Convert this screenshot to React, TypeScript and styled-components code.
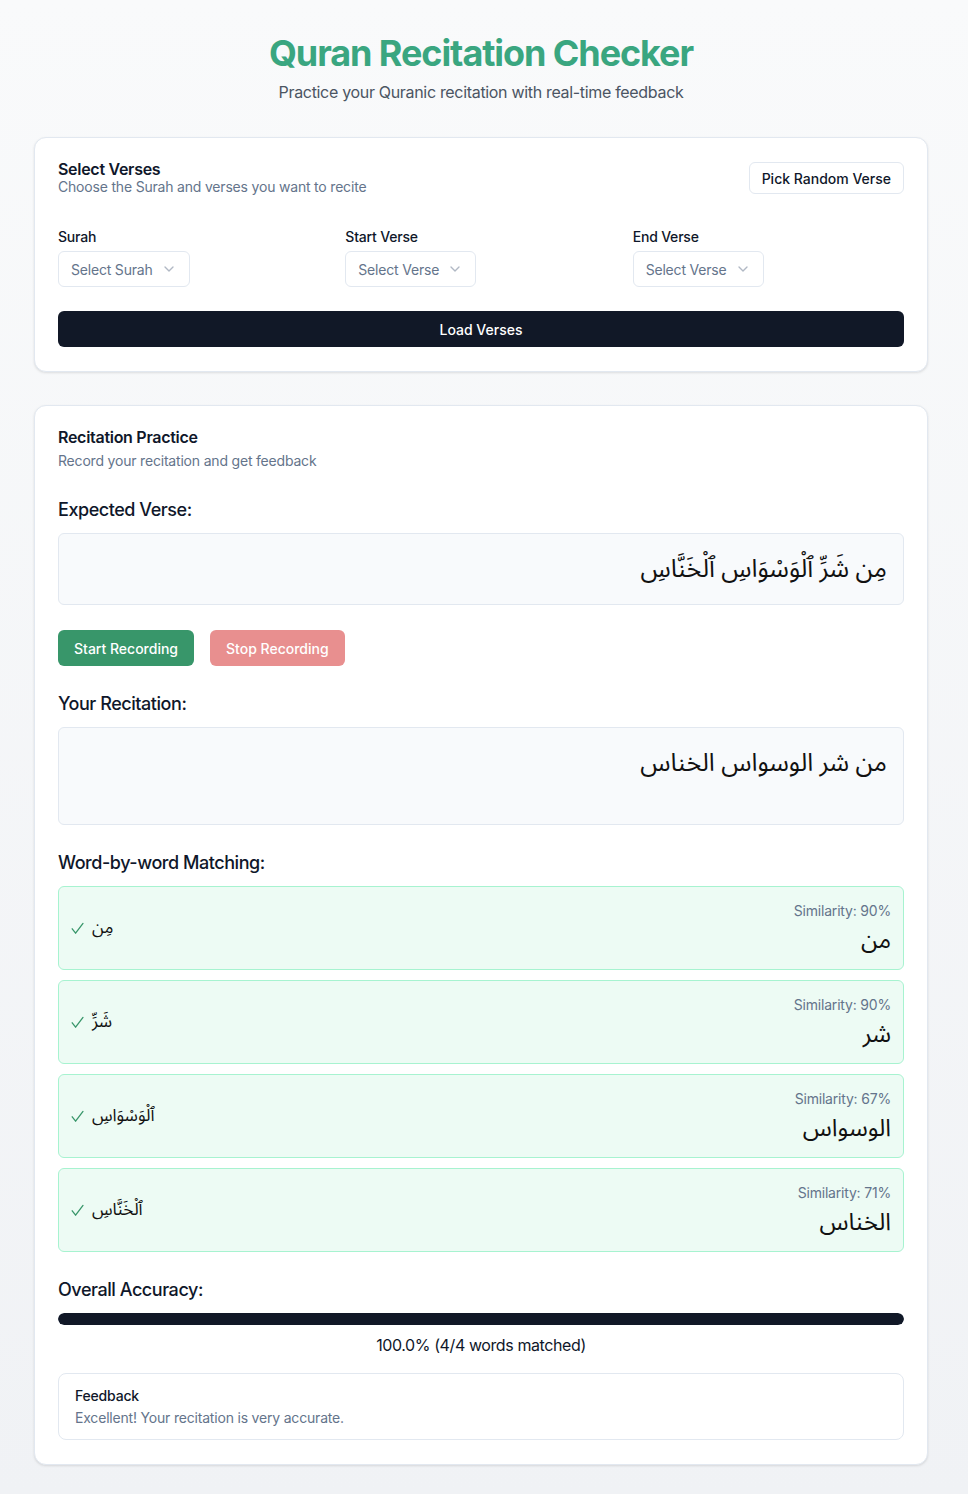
import React from "react";
import styled, { createGlobalStyle } from "styled-components";
import { ChevronDown } from "lucide-react";

const Global = createGlobalStyle`
  * { box-sizing: border-box; }
  html, body { margin: 0; padding: 0; }
  body {
    font-family: Inter, "Noto Sans", "DejaVu Sans", sans-serif;
    color: #0f172a;
    letter-spacing: -0.012em;
    background: linear-gradient(to bottom, #f9fafb, #f0f2f5);
    min-height: 1494px;
  }
`;

const arabicFont = `"Noto Sans Arabic", "DejaVu Sans", sans-serif`;

const Page = styled.div`
  min-height: 1494px;
  padding: 33px 40px 28px 34px;
  display: flex;
  flex-direction: column;
  gap: 33px;
`;

const Header = styled.header`
  text-align: center;
  display: flex;
  flex-direction: column;
  align-items: center;
  gap: 7px;
`;

const Title = styled.h1`
  margin: 0;
  font-size: 36px;
  line-height: 40px;
  font-weight: 700;
  color: #3aa680;
  letter-spacing: -0.03em;
`;

const Subtitle = styled.p`
  margin: 0;
  font-size: 16px;
  line-height: 24px;
  color: #4b5563;
  letter-spacing: -0.02em;
`;

const Card = styled.section<{ $pt: number }>`
  background: #fff;
  border: 1px solid #e2e8f0;
  border-radius: 12px;
  box-shadow: 0 1px 3px rgba(0, 0, 0, 0.08), 0 1px 2px rgba(0, 0, 0, 0.04);
  padding: ${(p) => p.$pt}px 23px 24px;
  display: flex;
  flex-direction: column;
`;

const CardHead = styled.div`
  display: flex;
  justify-content: space-between;
  align-items: center;
`;

const HeadText = styled.div<{ $gap: number }>`
  display: flex;
  flex-direction: column;
  gap: ${(p) => p.$gap}px;
`;

const CardTitle = styled.h2`
  margin: 0;
  font-size: 16px;
  line-height: 18px;
  font-weight: 600;
  color: #0f172a;
  letter-spacing: -0.018em;
`;

const CardDesc = styled.p`
  margin: 0;
  font-size: 14px;
  line-height: 18px;
  color: #64748b;
`;

const OutlineButton = styled.button`
  font-family: inherit;
  letter-spacing: 0;
  font-size: 14px;
  font-weight: 500;
  color: #0f172a;
  background: #fff;
  border: 1px solid #e2e8f0;
  border-radius: 6px;
  height: 32px;
  padding: 0 12px;
`;

const FieldGrid = styled.div`
  display: grid;
  grid-template-columns: repeat(3, 1fr);
  gap: 16px;
  margin-top: 32px;
`;

const Field = styled.div`
  display: flex;
  flex-direction: column;
  align-items: flex-start;
  gap: 5px;
`;

const Label = styled.label`
  font-size: 14px;
  line-height: 18px;
  font-weight: 500;
  color: #0f172a;
`;

const SelectBox = styled.div<{ $w: number }>`
  width: ${(p) => p.$w}px;
  height: 36px;
  border: 1px solid #e2e8f0;
  border-radius: 6px;
  padding: 0 12px;
  display: flex;
  align-items: center;
  justify-content: space-between;
  font-size: 14px;
  color: #64748b;
  svg { opacity: 0.5; }
`;

const PrimaryButton = styled.button`
  margin-top: 24px;
  width: 100%;
  height: 36px;
  border: none;
  border-radius: 6px;
  background: #111827;
  color: #fff;
  font-family: inherit;
  letter-spacing: 0;
  font-size: 14px;
  font-weight: 500;
`;

const SectionTitle = styled.h3<{ $mt: number }>`
  margin: ${(p) => p.$mt}px 0 11px;
  font-size: 18px;
  line-height: 24px;
  font-weight: 500;
  color: #0f172a;
  letter-spacing: -0.025em;
`;

const VerseBox = styled.div<{ $min: number }>`
  min-height: ${(p) => p.$min}px;
  background: #f8fafc;
  border: 1px solid #e2e8f0;
  border-radius: 6px;
  padding: 16px;
  direction: rtl;
  text-align: right;
  font-family: ${arabicFont};
  letter-spacing: 0;
  font-size: 25px;
  line-height: 38px;
  color: #111;
`;

const ButtonRow = styled.div`
  display: flex;
  gap: 16px;
  margin-top: 25px;
`;

const RecButton = styled.button<{ $bg: string }>`
  height: 36px;
  padding: 0 16px;
  border: none;
  border-radius: 6px;
  background: ${(p) => p.$bg};
  color: #fff;
  font-family: inherit;
  letter-spacing: 0;
  font-size: 14px;
  font-weight: 500;
`;

const MatchList = styled.div`
  display: flex;
  flex-direction: column;
  gap: 10px;
`;

const MatchItem = styled.div`
  height: 84px;
  background: #edfbf4;
  border: 1px solid #a7f3d0;
  border-radius: 6px;
  padding: 12px;
  display: flex;
  align-items: center;
  justify-content: space-between;
`;

const MatchLeft = styled.div`
  display: flex;
  align-items: center;
  gap: 8px;
  color: #38966a;
`;

const SmallArabic = styled.div`
  font-family: ${arabicFont};
  letter-spacing: 0;
  font-size: 17px;
  line-height: 24px;
  color: #111;
  direction: rtl;
`;

const MatchRight = styled.div`
  display: flex;
  flex-direction: column;
  align-items: flex-end;
  gap: 6px;
`;

const Similarity = styled.div`
  font-size: 14px;
  line-height: 20px;
  color: #64748b;
`;

const BigArabic = styled.div`
  font-family: ${arabicFont};
  letter-spacing: 0;
  font-size: 24px;
  line-height: 28px;
  color: #111;
  direction: rtl;
`;

const Progress = styled.div`
  height: 12px;
  border-radius: 999px;
  background: #e2e8f0;
  overflow: hidden;
`;

const ProgressFill = styled.div`
  height: 100%;
  background: #111827;
  border-radius: 999px;
`;

const AccuracyText = styled.p`
  margin: 8px 0 0;
  text-align: center;
  font-size: 16px;
  line-height: 24px;
  color: #0f172a;
  letter-spacing: -0.025em;
`;

const FeedbackBox = styled.div`
  margin-top: 16px;
  border: 1px solid #e2e8f0;
  border-radius: 8px;
  padding: 12px 16px 11px;
  display: flex;
  flex-direction: column;
  gap: 2px;
`;

const FeedbackTitle = styled.span`
  font-size: 14px;
  line-height: 20px;
  font-weight: 500;
  color: #0f172a;
`;

const FeedbackText = styled.span`
  font-size: 14px;
  line-height: 20px;
  color: #64748b;
`;

const CheckIcon = () => (
  <svg width="13" height="13" viewBox="0 0 13 13" fill="none">
    <path
      d="M1.2 6.8 L4.6 11.2 L12 1.4"
      stroke="currentColor"
      strokeWidth="1.3"
      strokeLinecap="round"
      strokeLinejoin="round"
    />
  </svg>
);

const words = [
  { exp: "مِن", got: "من", sim: 90 },
  { exp: "شَرِّ", got: "شر", sim: 90 },
  { exp: "ٱلْوَسْوَاسِ", got: "الوسواس", sim: 67 },
  { exp: "ٱلْخَنَّاسِ", got: "الخناس", sim: 71 },
];

export default function App() {
  const accuracy = 100;
  return (
    <>
      <Global />
      <Page>
        <Header>
          <Title>Quran Recitation Checker</Title>
          <Subtitle>Practice your Quranic recitation with real-time feedback</Subtitle>
        </Header>

        <Card $pt={22}>
          <CardHead>
            <HeadText $gap={0}>
              <CardTitle>Select Verses</CardTitle>
              <CardDesc>Choose the Surah and verses you want to recite</CardDesc>
            </HeadText>
            <OutlineButton>Pick Random Verse</OutlineButton>
          </CardHead>
          <FieldGrid>
            <Field>
              <Label>Surah</Label>
              <SelectBox $w={132}>
                Select Surah <ChevronDown size={16} />
              </SelectBox>
            </Field>
            <Field>
              <Label>Start Verse</Label>
              <SelectBox $w={131}>
                Select Verse <ChevronDown size={16} />
              </SelectBox>
            </Field>
            <Field>
              <Label>End Verse</Label>
              <SelectBox $w={131}>
                Select Verse <ChevronDown size={16} />
              </SelectBox>
            </Field>
          </FieldGrid>
          <PrimaryButton>Load Verses</PrimaryButton>
        </Card>

        <Card $pt={22}>
          <HeadText $gap={6}>
            <CardTitle>Recitation Practice</CardTitle>
            <CardDesc>Record your recitation and get feedback</CardDesc>
          </HeadText>

          <SectionTitle $mt={28}>Expected Verse:</SectionTitle>
          <VerseBox $min={72}>مِن شَرِّ ٱلْوَسْوَاسِ ٱلْخَنَّاسِ</VerseBox>

          <ButtonRow>
            <RecButton $bg="#38966a">Start Recording</RecButton>
            <RecButton $bg="#e88f8f">Stop Recording</RecButton>
          </ButtonRow>

          <SectionTitle $mt={26}>Your Recitation:</SectionTitle>
          <VerseBox $min={98}>من شر الوسواس الخناس</VerseBox>

          <SectionTitle $mt={26}>Word-by-word Matching:</SectionTitle>
          <MatchList>
            {words.map((w, i) => (
              <MatchItem key={i}>
                <MatchLeft>
                  <CheckIcon />
                  <SmallArabic>{w.exp}</SmallArabic>
                </MatchLeft>
                <MatchRight>
                  <Similarity>Similarity: {w.sim}%</Similarity>
                  <BigArabic>{w.got}</BigArabic>
                </MatchRight>
              </MatchItem>
            ))}
          </MatchList>

          <SectionTitle $mt={26}>Overall Accuracy:</SectionTitle>
          <Progress>
            <ProgressFill style={{ width: `${accuracy}%` }} />
          </Progress>
          <AccuracyText>100.0% (4/4 words matched)</AccuracyText>

          <FeedbackBox>
            <FeedbackTitle>Feedback</FeedbackTitle>
            <FeedbackText>Excellent! Your recitation is very accurate.</FeedbackText>
          </FeedbackBox>
        </Card>
      </Page>
    </>
  );
}
